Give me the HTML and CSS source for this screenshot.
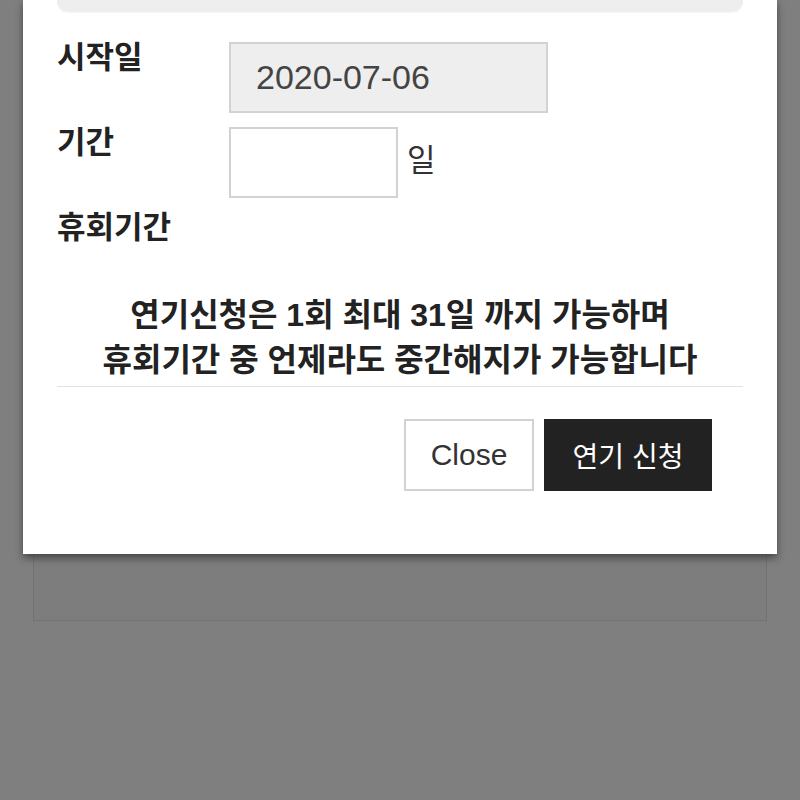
FILE: index.html
```html
<!DOCTYPE html>
<html lang="ko">
<head>
<meta charset="utf-8">
<title>연기 신청</title>
<link rel="stylesheet" href="styles.css">
</head>
<body>
<div class="backdrop">
  <div class="under-card"></div>
  <div class="modal">
    <div class="modal-head"></div>
    <div class="form">
      <div class="row">
        <div class="label">시작일</div>
        <input class="field field-date" type="text" value="2020-07-06" readonly>
      </div>
      <div class="row">
        <div class="label">기간</div>
        <div class="duration">
          <input class="field field-days" type="text" value="">
          <span class="unit">일</span>
        </div>
      </div>
      <div class="row">
        <div class="label">휴회기간</div>
      </div>
    </div>
    <p class="notice">연기신청은 1회 최대 31일 까지 가능하며<br>휴회기간 중 언제라도 중간해지가 가능합니다</p>
    <div class="footer">
      <button class="btn btn-close" type="button">Close</button>
      <button class="btn btn-primary" type="button">연기 신청</button>
    </div>
  </div>
</div>
</body>
</html>
```

FILE: styles.css
```css
html, body {
  margin: 0;
  padding: 0;
}

body {
  font-family: "Liberation Sans", "Noto Sans CJK KR", sans-serif;
  background: #7f7f7f;
}

.backdrop {
  position: relative;
  height: 800px;
  overflow: hidden;
  background: #7f7f7f;
  padding: 0 33px;
  box-sizing: border-box;
}

.under-card {
  margin-top: 300px;
  height: 321px;
  box-sizing: border-box;
  border: 1px solid #727272;
  background: #7d7d7d;
}

.modal {
  position: absolute;
  top: 0;
  left: 23px;
  width: 754px;
  box-sizing: border-box;
  background: #ffffff;
  padding: 0 34px 63px;
  box-shadow: 0 4px 8px rgba(0, 0, 0, 0.45);
}

.modal-head {
  height: 12px;
  background: #eeeeee;
  border-radius: 0 0 11px 11px;
  box-shadow: 0 1px 2px rgba(0, 0, 0, 0.04);
}

.form {
  display: flex;
  flex-direction: column;
  gap: 14px;
  padding-top: 30px;
}

.row {
  display: grid;
  grid-template-columns: 172px auto;
  align-items: start;
}

.label {
  font-weight: bold;
  font-size: 31px;
  line-height: 36px;
  color: #222222;
  margin-top: -2px;
}

.field {
  font-family: "Liberation Sans", "Noto Sans CJK KR", sans-serif;
  box-sizing: border-box;
  height: 71px;
  border: 2px solid #d2d2d2;
  border-radius: 0;
  margin: 0;
  outline: none;
}

.field-date {
  width: 319px;
  background: #eeeeee;
  color: #444444;
  font-size: 34px;
  padding: 0 0 0 25px;
}

.field-days {
  width: 169px;
  background: #ffffff;
  padding: 0 10px;
  font-size: 30px;
}

.duration {
  display: flex;
  align-items: center;
  gap: 9px;
}

.unit {
  font-size: 31px;
  color: #333333;
  margin-top: -10px;
}

.notice {
  margin: 47px 0 0;
  padding-bottom: 3px;
  border-bottom: 1px solid #e2e2e2;
  text-align: center;
  font-weight: bold;
  font-size: 32px;
  line-height: 45px;
  color: #222222;
}

.footer {
  display: flex;
  justify-content: flex-end;
  gap: 10px;
  padding: 32px 31px 0 0;
}

.btn {
  height: 72px;
  box-sizing: border-box;
  border-radius: 0;
  margin: 0;
  font-family: "Liberation Sans", "Noto Sans CJK KR", sans-serif;
  cursor: pointer;
}

.btn-close {
  width: 130px;
  background: #ffffff;
  border: 2px solid #d2d2d2;
  color: #333333;
  font-size: 30px;
}

.btn-primary {
  width: 168px;
  background: #222222;
  border: 1px solid #222222;
  color: #ffffff;
  font-size: 28px;
}
```
